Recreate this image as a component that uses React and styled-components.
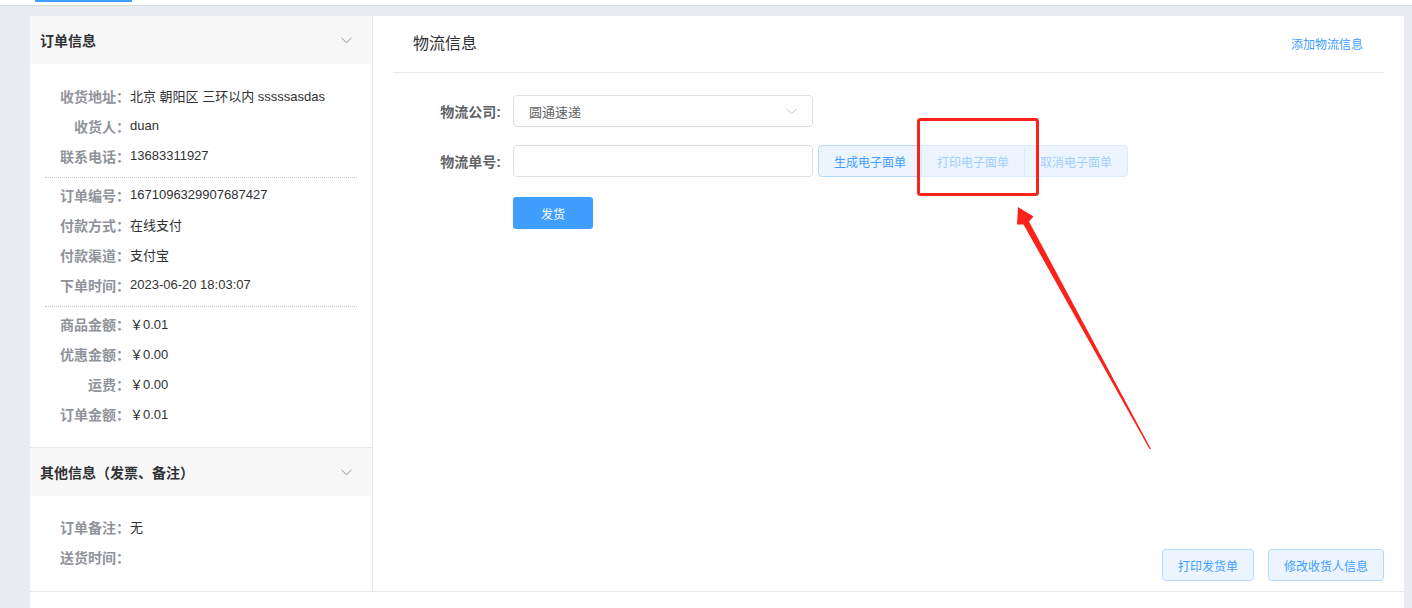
import React from "react";
import styled, { createGlobalStyle } from "styled-components";

const GlobalStyle = createGlobalStyle`
  html, body { margin: 0; padding: 0; }
  body {
    background: #e9edf1;
    font-family: "Liberation Sans", "Noto Sans CJK SC", sans-serif;
    color: #303133;
    overflow: hidden;
  }
  * { box-sizing: border-box; }
`;

const Screen = styled.div`
  position: relative;
  width: 1412px;
  height: 608px;
  overflow: hidden;
`;

const TopStrip = styled.div`
  height: 6px;
  background: #fff;
  border-bottom: 1px solid #d8dce1;
  padding-left: 35px;
`;

const ActiveTab = styled.div`
  width: 97px;
  height: 2px;
  background: #409eff;
`;

const Page = styled.div`
  padding: 10px 8px 0 30px;
`;

const Card = styled.div`
  background: #fff;
`;

const Row = styled.div`
  display: flex;
  border-bottom: 1px solid #e6e6e6;
`;

const LeftPanel = styled.div`
  width: 343px;
  border-right: 1px solid #e6e6e6;
  display: flex;
  flex-direction: column;
`;

const CollapseHead = styled.div`
  height: ${(p) => (p.$bordered ? 49 : 48)}px;
  background: #f7f7f7;
  border-top: ${(p) => (p.$bordered ? "1px solid #e6e6e6" : "none")};
  display: flex;
  align-items: center;
  justify-content: space-between;
  padding: 0 20px 0 10px;
  font-size: 14px;
  font-weight: bold;
  color: #303133;
`;

const CollapseBody = styled.div`
  padding: ${(p) => p.$pad};
`;

const InfoRow = styled.div`
  display: flex;
  align-items: center;
  height: 30px;
  padding-bottom: 1px;
`;

const InfoLabel = styled.span`
  width: 85px;
  text-align: right;
  font-size: 14px;
  font-weight: bold;
  color: #909399;
  white-space: nowrap;
`;

const InfoValue = styled.span`
  font-size: 13px;
  color: #303133;
  white-space: nowrap;
`;

const Dotted = styled.div`
  border-top: 1px dotted #c8c8c8;
  margin: 6px 0 2px;
`;

const RightPanel = styled.div`
  flex: 1;
  display: flex;
  flex-direction: column;
  padding: 0 20px 10px;
`;

const PanelHead = styled.div`
  height: 57px;
  border-bottom: 1px solid #e6e6e6;
  display: flex;
  align-items: center;
  justify-content: space-between;
  padding: 0 21px 4px 20px;
`;

const PanelTitle = styled.span`
  font-size: 16px;
  color: #303133;
`;

const TextLink = styled.a`
  font-size: 12px;
  color: #409eff;
  text-decoration: none;
  margin-top: 3px;
`;

const Form = styled.div`
  padding-top: 22px;
`;

const FormItem = styled.div`
  display: flex;
  align-items: center;
  margin-bottom: 18px;
  margin-top: ${(p) => (p.$shift ? "20px" : "0")};
`;

const FormLabel = styled.label`
  width: 120px;
  padding-right: 12px;
  text-align: right;
  font-size: 14px;
  font-weight: bold;
  color: #606266;
`;

const Field = styled.div`
  position: relative;
  width: 300px;
  height: 32px;
  border: 1px solid #dcdfe6;
  border-radius: 4px;
  padding: 0 15px;
  display: flex;
  align-items: center;
  justify-content: space-between;
  font-size: 13px;
  color: #606266;
`;

const ButtonGroup = styled.div`
  display: flex;
  margin-left: 5px;
`;

const PlainButton = styled.button`
  height: 32px;
  padding: 0 15px;
  font-family: inherit;
  font-size: 12px;
  background: #ecf5ff;
  color: ${(p) => (p.disabled ? "#a0cfff" : "#409eff")};
  border: 1px solid ${(p) => (p.disabled ? "#d9ecff" : "#b3d8ff")};
  border-radius: 4px;
  cursor: ${(p) => (p.disabled ? "not-allowed" : "pointer")};
  white-space: nowrap;
`;

const GroupButton = styled(PlainButton)`
  border-radius: 0;
  &:first-child { border-radius: 4px 0 0 4px; }
  &:last-child { border-radius: 0 4px 4px 0; }
  &:not(:first-child) { margin-left: -1px; }
  &:not(:first-child):not(:last-child) { border-right-color: #ffffff; }
`;

const PrimaryButton = styled.button`
  margin-left: 120px;
  width: 80px;
  height: 32px;
  border: none;
  border-radius: 3px;
  background: #409eff;
  color: #fff;
  font-family: inherit;
  font-size: 12px;
`;

const Spacer = styled.div`
  flex: 1;
`;

const Footer = styled.div`
  display: flex;
  justify-content: flex-end;
  gap: 14px;
`;

const NextSection = styled.div`
  height: 40px;
  background: #fff;
`;

const Annotation = styled.svg`
  position: absolute;
  left: 0;
  top: 0;
  pointer-events: none;
`;

const Chevron = ({ color = "#909399" }) => (
  <svg width="11" height="7" viewBox="0 0 11 7">
    <polyline points="0.5,0.8 5.5,5.8 10.5,0.8" fill="none" stroke={color} strokeWidth="1" />
  </svg>
);

const orderInfo = [
  [
    ["收货地址：", "北京 朝阳区 三环以内 sssssasdas"],
    ["收货人：", "duan"],
    ["联系电话：", "13683311927"],
  ],
  [
    ["订单编号：", "1671096329907687427"],
    ["付款方式：", "在线支付"],
    ["付款渠道：", "支付宝"],
    ["下单时间：", "2023-06-20 18:03:07"],
  ],
  [
    ["商品金额：", "￥0.01"],
    ["优惠金额：", "￥0.00"],
    ["运费：", "￥0.00"],
    ["订单金额：", "￥0.01"],
  ],
];

const otherInfo = [
  ["订单备注：", "无"],
  ["送货时间：", ""],
];

export default function App() {
  return (
    <Screen>
      <GlobalStyle />
      <TopStrip>
        <ActiveTab />
      </TopStrip>
      <Page>
        <Card>
          <Row>
            <LeftPanel>
              <CollapseHead>
                <span>订单信息</span>
                <Chevron color="#8a93a8" />
              </CollapseHead>
              <CollapseBody $pad="17px 15px 18px">
                {orderInfo.map((group, gi) => (
                  <React.Fragment key={gi}>
                    {gi > 0 && <Dotted />}
                    {group.map(([l, v]) => (
                      <InfoRow key={l}>
                        <InfoLabel>{l}</InfoLabel>
                        <InfoValue>{v}</InfoValue>
                      </InfoRow>
                    ))}
                  </React.Fragment>
                ))}
              </CollapseBody>
              <CollapseHead $bordered>
                <span>其他信息（发票、备注）</span>
                <Chevron color="#8a93a8" />
              </CollapseHead>
              <CollapseBody $pad="16px 15px 19px">
                {otherInfo.map(([l, v]) => (
                  <InfoRow key={l}>
                    <InfoLabel>{l}</InfoLabel>
                    <InfoValue>{v}</InfoValue>
                  </InfoRow>
                ))}
              </CollapseBody>
            </LeftPanel>
            <RightPanel>
              <PanelHead>
                <PanelTitle>物流信息</PanelTitle>
                <TextLink href="#">添加物流信息</TextLink>
              </PanelHead>
              <Form>
                <FormItem>
                  <FormLabel>物流公司:</FormLabel>
                  <Field>
                    <span>圆通速递</span>
                    <Chevron color="#c0c4cc" />
                  </Field>
                </FormItem>
                <FormItem>
                  <FormLabel>物流单号:</FormLabel>
                  <Field />
                  <ButtonGroup>
                    <GroupButton>生成电子面单</GroupButton>
                    <GroupButton disabled>打印电子面单</GroupButton>
                    <GroupButton disabled>取消电子面单</GroupButton>
                  </ButtonGroup>
                </FormItem>
                <FormItem $shift>
                  <PrimaryButton>发货</PrimaryButton>
                </FormItem>
              </Form>
              <Spacer />
              <Footer>
                <PlainButton>打印发货单</PlainButton>
                <PlainButton>修改收货人信息</PlainButton>
              </Footer>
            </RightPanel>
          </Row>
          <NextSection />
        </Card>
      </Page>
      <Annotation width="1412" height="608" viewBox="0 0 1412 608">
        <rect x="918.5" y="119.5" width="119" height="75" rx="2" fill="none" stroke="#f9231b" strokeWidth="3" />
        <polygon
          points="1018,207 1033.5,216.5 1029,221.5 1151,449 1149.5,449 1023.5,224.5 1017,224.5"
          fill="#f9231b"
        />
      </Annotation>
    </Screen>
  );
}
